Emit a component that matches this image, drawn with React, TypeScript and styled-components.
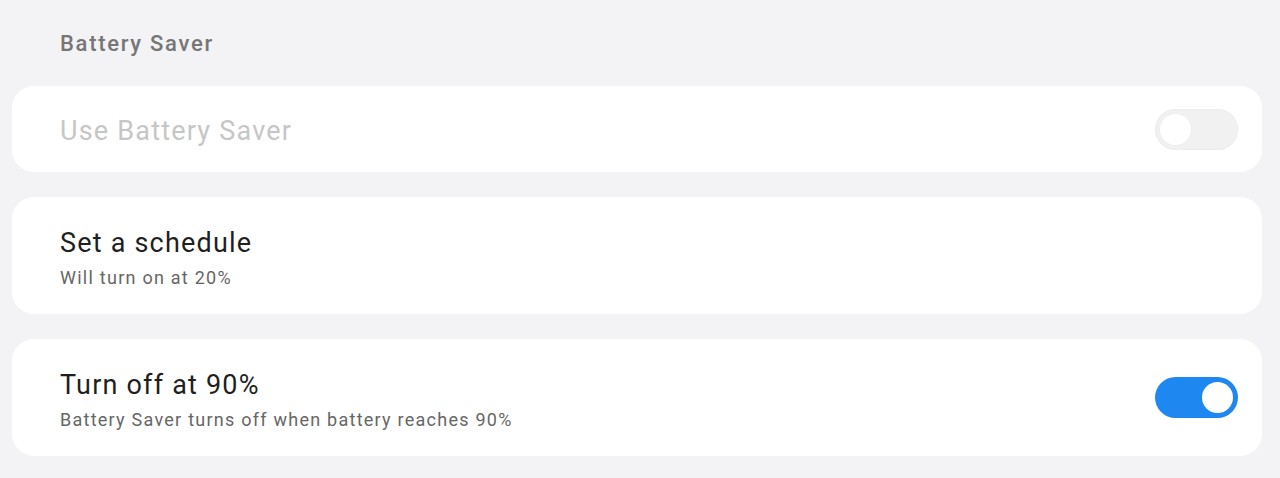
import styled, { createGlobalStyle } from "styled-components";

const GlobalStyle = createGlobalStyle`
  html, body {
    margin: 0;
    padding: 0;
    background: #f3f3f5;
    font-family: Roboto, "Noto Sans", sans-serif;
  }
`;

interface ToggleProps {
  on?: boolean;
  disabled?: boolean;
}

const Toggle = (props: ToggleProps) => {
  return (
    <StyledTrack $on={!!props.on} $disabled={!!props.disabled}>
      <StyledThumb $on={!!props.on} $disabled={!!props.disabled} />
    </StyledTrack>
  );
};

interface RowProps {
  title: string;
  subtitle?: string;
  disabled?: boolean;
  toggle?: React.ReactNode;
}

const SettingRow = (props: RowProps) => {
  const tall = !!props.subtitle;
  return (
    <StyledCard $tall={tall}>
      <StyledTexts $tall={tall}>
        <StyledTitle $disabled={!!props.disabled}>{props.title}</StyledTitle>
        {props.subtitle && <StyledSubtitle>{props.subtitle}</StyledSubtitle>}
      </StyledTexts>
      {props.toggle}
    </StyledCard>
  );
};

export default function App() {
  return (
    <>
      <GlobalStyle />
      <StyledPage>
        <StyledHeader>Battery Saver</StyledHeader>
        <StyledList>
          <SettingRow title="Use Battery Saver" disabled toggle={<Toggle disabled />} />
          <SettingRow title="Set a schedule" subtitle="Will turn on at 20%" />
          <SettingRow
            title="Turn off at 90%"
            subtitle="Battery Saver turns off when battery reaches 90%"
            toggle={<Toggle on />}
          />
        </StyledList>
      </StyledPage>
    </>
  );
}

const StyledPage = styled.div`
  padding: 0 18px 0 12px;
  height: 478px;
  box-sizing: border-box;
`;

const StyledHeader = styled.div`
  height: 86px;
  box-sizing: border-box;
  padding: 31px 0 0 48px;
  font-size: 22px;
  font-weight: 500;
  letter-spacing: 1.7px;
  color: #767676;
`;

const StyledList = styled.div`
  display: flex;
  flex-direction: column;
  gap: 25px;
`;

const StyledCard = styled.div<{ $tall: boolean }>`
  display: flex;
  align-items: center;
  justify-content: space-between;
  background: #ffffff;
  border-radius: 22px;
  height: ${(props) => (props.$tall ? "117px" : "86px")};
  box-sizing: border-box;
  padding: 0 24px 0 48px;
`;

const StyledTexts = styled.div<{ $tall: boolean }>`
  display: flex;
  flex-direction: column;
  gap: 8px;
  padding-top: ${(props) => (props.$tall ? "5px" : "3px")};
`;

const StyledTitle = styled.div<{ $disabled: boolean }>`
  font-size: 27px;
  letter-spacing: 1.2px;
  line-height: 32px;
  color: ${(props) => (props.$disabled ? "#c6c6c6" : "#1f1f1f")};
`;

const StyledSubtitle = styled.div`
  font-size: 18px;
  letter-spacing: 1.25px;
  line-height: 22px;
  color: #666666;
`;

const StyledTrack = styled.div<{ $on: boolean; $disabled: boolean }>`
  position: relative;
  width: 83px;
  height: 41px;
  border-radius: 21px;
  background: ${(props) => (props.$on ? "#1f87f0" : "#f1f1f1")};
  box-shadow: ${(props) => (props.$disabled ? "inset 0 0 0 1px #ececec" : "none")};
`;

const StyledThumb = styled.div<{ $on: boolean; $disabled: boolean }>`
  position: absolute;
  top: 5px;
  left: ${(props) => (props.$on ? "47px" : "5px")};
  width: 31px;
  height: 31px;
  border-radius: 50%;
  background: #ffffff;
  box-shadow: ${(props) => (props.$disabled ? "0 0 0 1px #eeeeee" : "none")};
`;
